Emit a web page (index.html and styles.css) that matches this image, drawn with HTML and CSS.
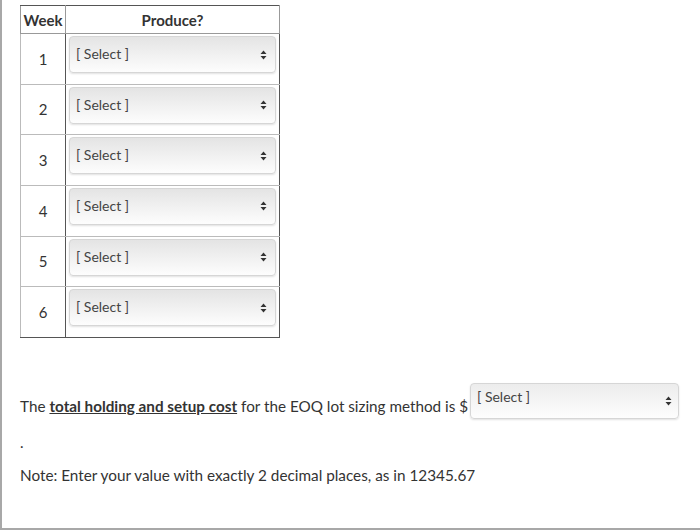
FILE: index.html
```html
<!DOCTYPE html>
<html>
<head>
<meta charset="utf-8">
<link rel="stylesheet" href="styles.css">
</head>
<body>
<div class="frame">
  <table class="grid">
    <thead>
      <tr><th class="wk">Week</th><th>Produce?</th></tr>
    </thead>
    <tbody>
      <tr><td class="num">1</td><td><div class="sel"><span>[ Select ]</span><svg class="arr" width="7" height="10" viewBox="0 0 7 10"><path d="M3.5 0.5L6.5 4H0.5Z M0.5 6H6.5L3.5 9.5Z" fill="#333"/></svg></div></td></tr>
      <tr><td class="num">2</td><td><div class="sel"><span>[ Select ]</span><svg class="arr" width="7" height="10" viewBox="0 0 7 10"><path d="M3.5 0.5L6.5 4H0.5Z M0.5 6H6.5L3.5 9.5Z" fill="#333"/></svg></div></td></tr>
      <tr><td class="num">3</td><td><div class="sel"><span>[ Select ]</span><svg class="arr" width="7" height="10" viewBox="0 0 7 10"><path d="M3.5 0.5L6.5 4H0.5Z M0.5 6H6.5L3.5 9.5Z" fill="#333"/></svg></div></td></tr>
      <tr><td class="num">4</td><td><div class="sel"><span>[ Select ]</span><svg class="arr" width="7" height="10" viewBox="0 0 7 10"><path d="M3.5 0.5L6.5 4H0.5Z M0.5 6H6.5L3.5 9.5Z" fill="#333"/></svg></div></td></tr>
      <tr><td class="num">5</td><td><div class="sel"><span>[ Select ]</span><svg class="arr" width="7" height="10" viewBox="0 0 7 10"><path d="M3.5 0.5L6.5 4H0.5Z M0.5 6H6.5L3.5 9.5Z" fill="#333"/></svg></div></td></tr>
      <tr><td class="num">6</td><td><div class="sel"><span>[ Select ]</span><svg class="arr" width="7" height="10" viewBox="0 0 7 10"><path d="M3.5 0.5L6.5 4H0.5Z M0.5 6H6.5L3.5 9.5Z" fill="#333"/></svg></div></td></tr>
    </tbody>
  </table>

  <p class="q">The <strong class="key">total holding and setup cost</strong> for the EOQ lot sizing method is $ <span class="sel wide"><span>[ Select ]</span><svg class="arr" width="7" height="10" viewBox="0 0 7 10"><path d="M3.5 0.5L6.5 4H0.5Z M0.5 6H6.5L3.5 9.5Z" fill="#333"/></svg></span></p>
  <p class="dot">.</p>
  <p class="note">Note: Enter your value with exactly 2 decimal places, as in 12345.67</p>
</div>
</body>
</html>
```
FILE: styles.css
```css
html, body {
  margin: 0;
  padding: 0;
  background: #fff;
}
body {
  font-family: Lato, "Liberation Sans", sans-serif;
  color: #2d3b45;
}
.frame {
  box-sizing: border-box;
  width: 700px;
  height: 530px;
  border-left: 2px solid #a8a8a8;
  border-bottom: 2px solid #a8a8a8;
  padding: 5px 0 0 18px;
}
.grid {
  border-collapse: collapse;
  width: 260px;
  border: 1px solid #555;
}
.grid th {
  height: 27px;
  font-size: 15px;
  font-weight: 700;
  color: #333;
  padding: 0;
  border: 1px solid #999;
  border-top-color: #555;
  text-align: center;
}
.grid th.wk {
  width: 40px;
  padding: 0 2px;
}
.grid td {
  height: 49.67px;
  padding: 0;
  border: 1px solid #bbb;
  vertical-align: top;
}
.grid td.num {
  border-right: 1px solid #555;
  text-align: center;
  vertical-align: middle;
  font-size: 15px;
  color: #333;
}
.grid td:last-child {
  border-right: 1px solid #555;
}
.grid tr:last-child td {
  border-bottom: 1px solid #555;
}
.sel {
  box-sizing: border-box;
  display: flex;
  align-items: center;
  justify-content: space-between;
  height: 37px;
  margin: 2px 3px 0 3px;
  padding: 0 8px 0 6px;
  border: 1px solid #d6d6d6;
  border-radius: 4px;
  background: linear-gradient(#e4e4e4, #fdfdfd);
  box-shadow: 0 1px 2px rgba(0,0,0,0.12);
  font-size: 14px;
  color: #444;
}
.sel span {
  margin-top: -2px;
}
.arr {
  display: block;
}
.q {
  margin: 45px 0 0 0;
  font-size: 15.25px;
  color: #333;
  display: flex;
  align-items: center;
}
.key {
  text-decoration: underline;
  margin: 0 4px;
}
.q .wide {
  width: 209px;
  height: 36px;
  margin: 0 0 10px 2px;
  align-items: flex-start;
  padding-top: 6px;
  padding-right: 6px;
  background: linear-gradient(#ececec, #fdfdfd);
}
.q .wide span {
  margin-top: -2px;
}
.q .wide .arr {
  margin-top: 6px;
}
.dot {
  margin: 4px 0 0 0;
  font-size: 15px;
  line-height: 18px;
  color: #333;
}
.note {
  margin: 15px 0 0 0;
  font-size: 15.3px;
  color: #333;
}
```
